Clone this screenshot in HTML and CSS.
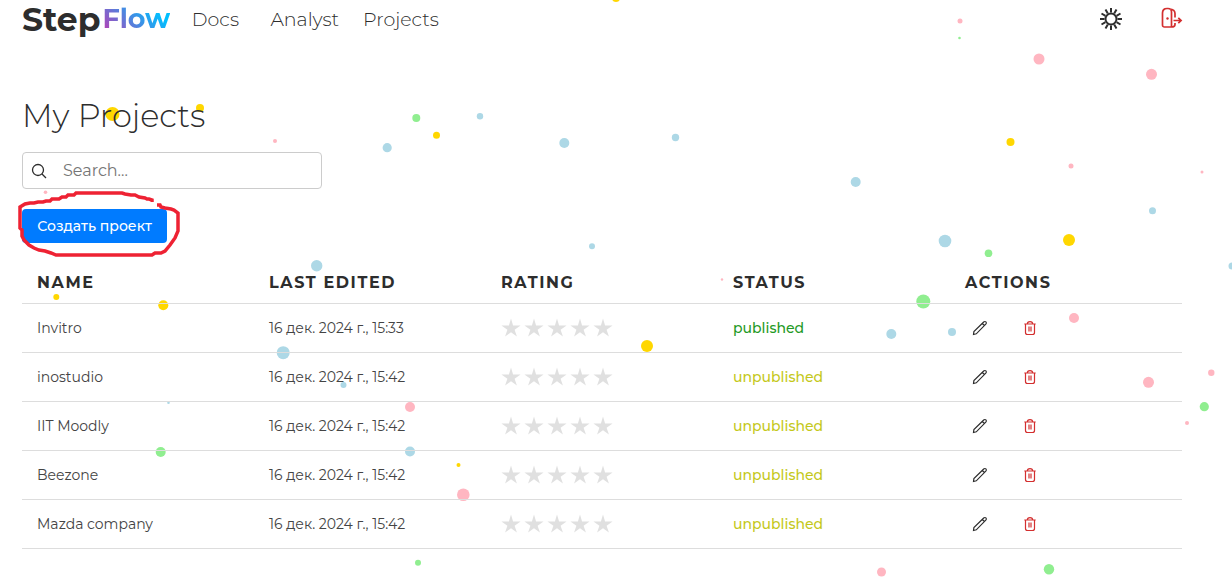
FILE: index.html
```html
<!DOCTYPE html>
<html lang="ru">
<head>
<meta charset="utf-8">
<title>StepFlow – My Projects</title>
<link rel="stylesheet" href="styles.css">
</head>
<body>
<svg class="symbols" aria-hidden="true">
  <symbol id="star" viewBox="0 0 24 24"><path d="M12 .500l2.500 8.500h9l-7.200 5 2.800 8.300-7.100-5.100-7.100 5.100 2.800-8.300L.500 9h9z"/></symbol>
  <symbol id="pencil" viewBox="0 0 16 16"><path d="M1.500 14.500l.4-3L11.700 2c.7-.7 1.700-.6 2.200-.1s.6 1.500-.1 2.200L4.300 13.800zM10.300 3.500l2 2"/></symbol>
  <symbol id="trash" viewBox="0 0 16 16"><path d="M2.300 4h11.400M5.300 4c0-3.200 5.400-3.200 5.400 0M3.500 4v8.500c0 1.300.7 2 2 2h5c1.300 0 2-.7 2-2V4M7 6.500v5M9 6.500v5"/></symbol>
</svg>
<svg class="confetti" aria-hidden="true">
  <g class="gold"><circle cx="616" cy="-2" r="4"/><circle cx="112.500" cy="114" r="7"/><circle cx="200" cy="108" r="4"/><circle cx="436.500" cy="135.300" r="3.500"/><circle cx="1010.500" cy="142" r="4"/><circle cx="1069" cy="240" r="6"/><circle cx="56.300" cy="297" r="3"/><circle cx="163.300" cy="305.300" r="5"/><circle cx="647" cy="346" r="6"/><circle cx="458.500" cy="465" r="2"/></g>
  <g class="pink"><circle cx="960" cy="21" r="2.500"/><circle cx="1039" cy="59" r="5.500"/><circle cx="1151.500" cy="74.300" r="5.500"/><circle cx="275" cy="141" r="2"/><circle cx="45.500" cy="192.300" r="1.800"/><circle cx="1071" cy="166" r="2.500"/><circle cx="1202" cy="172" r="1.500"/><circle cx="722" cy="279.500" r="1.200"/><circle cx="1074" cy="318" r="5"/><circle cx="1148.500" cy="382.300" r="5.500"/><circle cx="1211.300" cy="372.700" r="3.200"/><circle cx="1187" cy="423" r="2"/><circle cx="410" cy="407" r="5"/><circle cx="463.300" cy="494.700" r="6.300"/><circle cx="881.500" cy="572" r="4.500"/></g>
  <g class="blue"><circle cx="387.200" cy="147.700" r="4.600"/><circle cx="480" cy="116.300" r="3.200"/><circle cx="564.300" cy="143" r="5"/><circle cx="675.500" cy="137.500" r="3.700"/><circle cx="855.700" cy="182" r="5"/><circle cx="1152.500" cy="210.700" r="3.500"/><circle cx="592" cy="246.300" r="3"/><circle cx="945" cy="241" r="6.300"/><circle cx="316.700" cy="265.700" r="5.700"/><circle cx="1232" cy="266" r="3.500"/><circle cx="891.300" cy="334" r="5"/><circle cx="952" cy="332" r="4"/><circle cx="283.200" cy="352.700" r="6.500"/><circle cx="343.500" cy="385" r="3"/><circle cx="168.500" cy="402.700" r="1.300"/><circle cx="410" cy="451.500" r="5"/></g>
  <g class="green"><circle cx="959.500" cy="38" r="1.300"/><circle cx="416.300" cy="118" r="4"/><circle cx="988.500" cy="253.300" r="3.800"/><circle cx="923.300" cy="301.500" r="7"/><circle cx="1204.300" cy="406.700" r="4.600"/><circle cx="160.700" cy="452" r="5"/><circle cx="418" cy="562.700" r="3"/><circle cx="1049" cy="569.300" r="5.200"/></g>
</svg>
<div class="page">
  <header class="topbar">
    <a class="logo" href="#"><span class="logo-step">Step</span><span class="logo-flow">Flow</span></a>
    <nav class="nav"><a href="#">Docs</a><a href="#">Analyst</a><a href="#">Projects</a></nav>
    <div class="tools">
      <button class="icon-button" aria-label="Theme"><svg class="sun" viewBox="0 0 24 24"><circle cx="12" cy="12" r="5.500"/><path d="M12 1v4.500M12 18.500V23M1 12h4.500M18.500 12H23M6.500 2.500l2.300 4M15.200 17.500l2.300 4M2.500 6.500l4 2.300M17.500 15.200l4 2.300M2.500 17.500l4-2.300M17.500 8.800l4-2.300M6.500 21.500l2.300-4M15.200 6.500l2.300-4"/></svg></button>
      <button class="icon-button" aria-label="Log out"><svg class="exit" viewBox="0 0 24 24"><path d="M2.500 18V6c0-3 2-4.500 4.500-4.500h1c2.500 0 3.500 1.500 3.500 3.500v15H4.500c-1.300 0-2-.7-2-2zM9.500 2c3.500.2 5.500 1.300 5.500 4.500v4M15 16v1.500c0 1.800-1 2.500-3.500 2.500M13.500 13.500h7.500M18.300 10.800l2.800 2.700-2.800 2.700"/><circle class="knob" cx="7.500" cy="11.500" r="1.200"/></svg></button>
    </div>
  </header>
  <main>
    <h1 class="title">My Projects</h1>
    <label class="search">
      <svg class="search-icon" viewBox="0 0 16 16"><circle cx="7" cy="7" r="5.500"/><path d="M11 11l4 4"/></svg>
      <input type="text" placeholder="Search..." aria-label="Search">
    </label>
    <div class="create">
      <button class="create-button">Создать проект</button>
      <svg class="marker" viewBox="12 187 172 74" aria-hidden="true"><path d="M152 202v-2l-3-1h-2l-2-1-6-1-4-2h-4l-6-1-3-1H76l-2 2h-6l-2 2h-4l-3 2h-7l-2 2h-4l-3 1h-5l-4 1h-4l-5 1-5 3v21l2 2v6l2 4 5 5 5 3 5 2 6 1 6 2 5 2h96l3-2h6l4-2 5-6 5-7 3-7v-18l-4-3-3-1-6-1-4-1-1-2h-3"/></svg>
    </div>
    <table class="projects">
      <thead><tr><th>NAME</th><th>LAST EDITED</th><th>RATING</th><th>STATUS</th><th>ACTIONS</th></tr></thead>
      <tbody id="rows"></tbody>
    </table>
  </main>
</div>
<script src="app.js"></script>
</body>
</html>
```
FILE: app.js
```js
const projects = [
  ["Invitro", "16 дек. 2024 г., 15:33", "published"],
  ["inostudio", "16 дек. 2024 г., 15:42", "unpublished"],
  ["IIT Moodly", "16 дек. 2024 г., 15:42", "unpublished"],
  ["Beezone", "16 дек. 2024 г., 15:42", "unpublished"],
  ["Mazda company", "16 дек. 2024 г., 15:42", "unpublished"]
];
const star = '<svg class="star"><use href="#star"/></svg>';
document.getElementById("rows").innerHTML = projects.map(([name, date, status]) => `
  <tr>
    <td>${name}</td>
    <td>${date}</td>
    <td><div class="stars">${star.repeat(5)}</div></td>
    <td class="${status}">${status}</td>
    <td><div class="actions">
      <button class="action" aria-label="Edit ${name}"><svg><use href="#pencil"/></svg></button>
      <button class="action delete" aria-label="Delete ${name}"><svg><use href="#trash"/></svg></button>
    </div></td>
  </tr>`).join("");
```
FILE: styles.css
```css
* { box-sizing: border-box; }
body {
  margin: 0;
  min-height: 100vh;
  position: relative;
  overflow-x: hidden;
  background: #fff;
  color: #2d2d2d;
  font-family: Montserrat, Inter, "Noto Sans", sans-serif;
}
button { font: inherit; border: 0; background: none; padding: 0; }
a { color: inherit; text-decoration: none; }
.symbols { position: absolute; width: 0; height: 0; }
.confetti { position: absolute; top: 0; left: 0; width: 100%; height: 100%; }
.gold { fill: #ffd700; }
.pink { fill: #ffb6c1; }
.blue { fill: #add8e6; }
.green { fill: #90ee90; }
.page { position: relative; padding: 0 48px 0 22px; }
.topbar { display: flex; align-items: center; height: 38px; }
.logo { display: flex; align-items: center; gap: 2px; font-weight: 700; }
.logo-step { font-size: 33px; line-height: 38px; }
.logo-flow {
  font-size: 27px;
  line-height: 28px;
  background: linear-gradient(45deg, #c436b0, #3f8fe5 50%, #00bfff 80%);
  background-clip: text;
  -webkit-background-clip: text;
  color: transparent;
}
.nav { display: flex; gap: 24px; margin-left: 14px; font-size: 19px; font-weight: 300; }
.nav a { min-width: 62px; text-align: center; }
.tools { display: flex; gap: 37px; margin-left: auto; }
.icon-button { display: flex; width: 24px; height: 24px; }
.icon-button svg { width: 24px; height: 24px; fill: none; }
.sun { stroke: #2d2d2d; stroke-width: 2; }
.exit { stroke: #d32f2f; stroke-width: 1.700; }
.exit .knob { fill: #d32f2f; stroke: none; }
main { padding-right: 2px; }
.title { margin: 58px 0 16px; font-size: 32px; line-height: 40px; font-weight: 300; }
.search {
  display: flex;
  align-items: center;
  gap: 16px;
  width: 300px;
  height: 37px;
  padding: 0 8px;
  background: #fff;
  border: 1px solid #ccc;
  border-radius: 4px;
}
.search-icon { width: 16px; height: 16px; flex: none; fill: none; stroke: #2d2d2d; stroke-width: 1.3; }
.search input { min-width: 0; flex: 1; padding: 0; border: 0; outline: 0; background: none; font: inherit; font-size: 16px; }
.search input::placeholder { color: #757575; }
.create { position: relative; width: fit-content; margin: 20px 0; }
.create-button {
  display: block;
  width: 145px;
  height: 34px;
  background: #007bff;
  border-radius: 4px;
  color: #fff;
  font-size: 14px;
  font-weight: 500;
}
.marker { position: absolute; left: -10px; top: -22px; width: 172px; height: 74px; fill: none; stroke: #ee2233; stroke-width: 3.5; pointer-events: none; }
.projects { width: 100%; table-layout: fixed; border-collapse: collapse; font-size: 14px; }
.projects th { height: 40px; padding: 0 15px; text-align: left; font-size: 16px; font-weight: 700; letter-spacing: 0.1em; }
.projects td { height: 49px; padding: 0 15px; color: #444; }
.projects tr { border-bottom: 1px solid #ddd; }
.projects .published { color: #1f9a26; font-weight: 500; }
.projects .unpublished { color: #c4c81a; font-weight: 500; }
.stars { display: flex; gap: 3px; }
.star { width: 20px; height: 20px; fill: #e0e0e0; }
.actions { display: flex; gap: 20px; }
.action { display: flex; align-items: center; justify-content: center; width: 30px; height: 30px; }
.action svg { width: 16px; height: 16px; fill: none; stroke: #2d2d2d; stroke-width: 1.2; }
.action.delete svg { stroke: #d32f2f; }
```
